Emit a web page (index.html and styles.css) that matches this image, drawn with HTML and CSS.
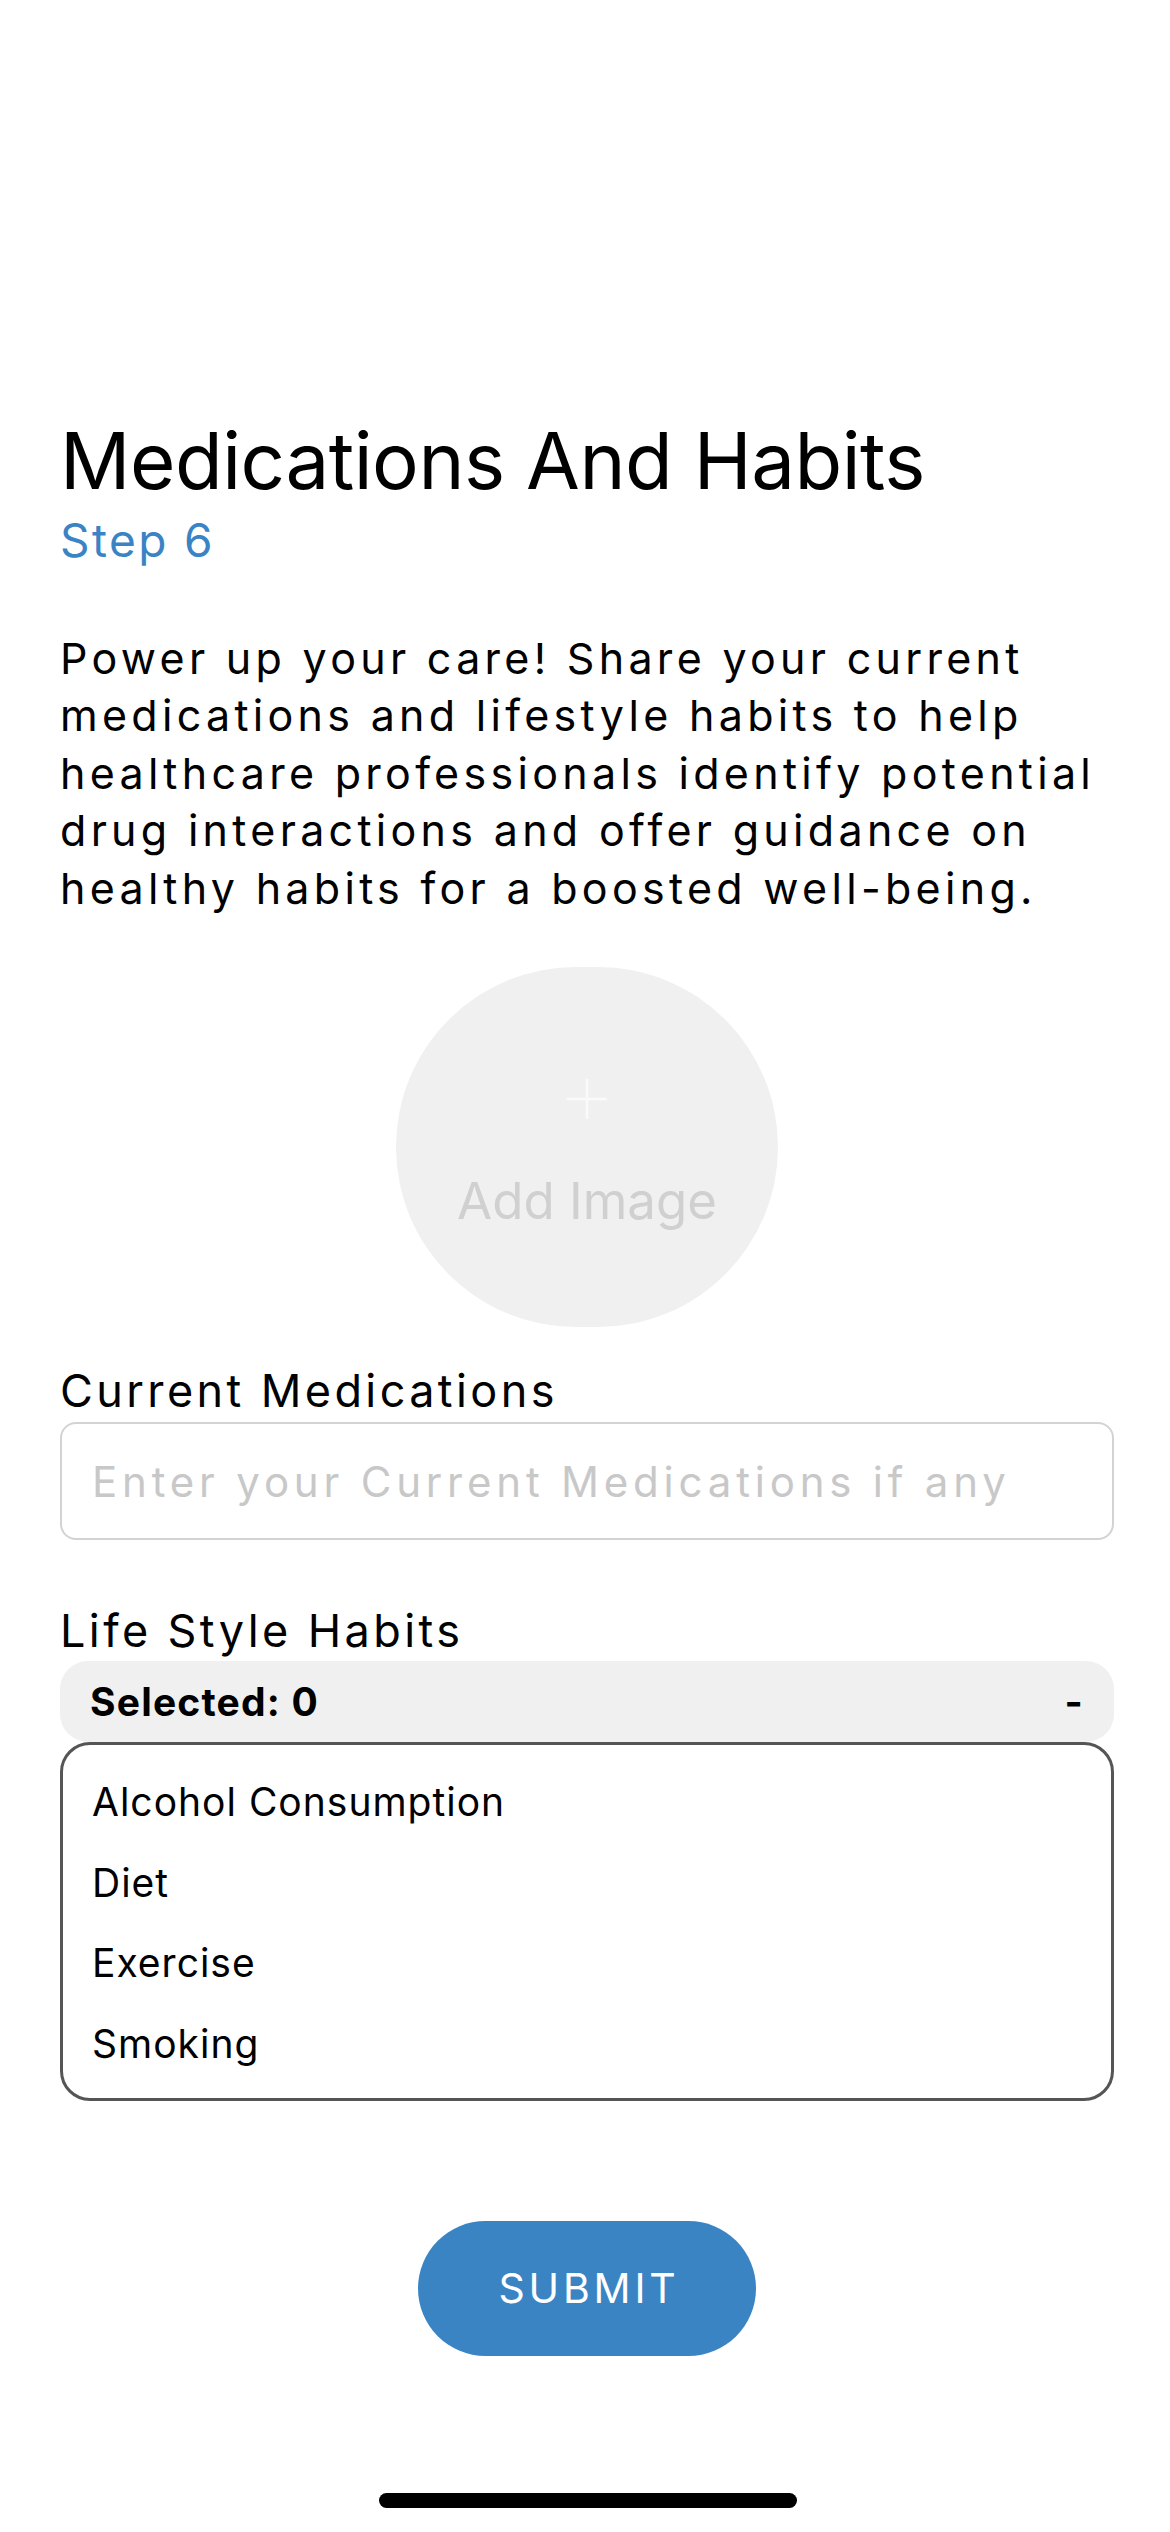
FILE: index.html
```html
<!DOCTYPE html>
<html lang="en">
<head>
<meta charset="utf-8">
<title>Medications And Habits</title>
<link rel="stylesheet" href="styles.css">
</head>
<body>
<main class="page">
  <h1 class="title">Medications And Habits</h1>
  <div class="step">Step 6</div>
  <p class="intro">Power up your care! Share your current medications and lifestyle habits to help healthcare professionals identify potential drug interactions and offer guidance on healthy habits for a boosted well-being.</p>

  <div class="avatar-wrap">
    <div class="avatar">
      <svg class="plus" width="40" height="40" viewBox="0 0 40 40"><path d="M20 0V40M0 20H40" stroke="#fafafa" stroke-width="2.5" fill="none"/></svg>
      <span class="avatar-text">Add Image</span>
    </div>
  </div>

  <label class="label label-meds" for="meds">Current Medications</label>
  <input id="meds" class="text-input" type="text" placeholder="Enter your Current Medications if any">

  <div class="label label-habits">Life Style Habits</div>
  <div class="select-bar"><span class="selected">Selected: 0</span><span class="dash">-</span></div>
  <ul class="options">
    <li>Alcohol Consumption</li>
    <li>Diet</li>
    <li>Exercise</li>
    <li>Smoking</li>
  </ul>

  <div class="submit-wrap"><button class="submit" type="button">SUBMIT</button></div>
</main>
<div class="home-indicator"></div>
</body>
</html>
```

FILE: styles.css
```css
html, body {
  margin: 0;
  padding: 0;
  background: #ffffff;
}
body {
  width: 1170px;
  height: 2532px;
  position: relative;
  overflow: hidden;
  font-family: Inter, "Noto Sans", sans-serif;
  color: #000;
}
.page {
  padding: 414px 56px 0 60px;
  display: flex;
  flex-direction: column;
}
.title {
  margin: 0;
  font-size: 78px;
  font-weight: 400;
  line-height: 94px;
  letter-spacing: -0.5px;
}
.step {
  margin-top: 5px;
  font-size: 46px;
  line-height: 55px;
  color: #3a83c5;
  letter-spacing: 2.4px;
}
.intro {
  margin: 62px -30px 0 0;
  font-size: 43px;
  line-height: 57.4px;
  letter-spacing: 4.3px;
}
.avatar-wrap {
  margin-top: 50px;
  display: flex;
  justify-content: center;
}
.avatar {
  width: 382px;
  height: 360px;
  border-radius: 180px;
  background: #f0f0f0;
  display: flex;
  flex-direction: column;
  align-items: center;
  padding-top: 112px;
  box-sizing: border-box;
}
.plus {
  display: block;
}
.avatar-text {
  margin-top: 51px;
  font-size: 51px;
  line-height: 61px;
  color: #d0d0d0;
}
.label {
  display: block;
  font-size: 45px;
  line-height: 54px;
  letter-spacing: 3.4px;
}
.label-meds {
  margin-top: 37px;
}
.text-input {
  margin-top: 4px;
  height: 118px;
  box-sizing: border-box;
  width: 100%;
  border: 2.5px solid #d3d3d3;
  border-radius: 16px;
  padding: 0 30px;
  font-family: Inter, "Noto Sans", sans-serif;
  font-size: 42px;
  letter-spacing: 4.8px;
  background: #fff;
  outline: none;
}
.text-input::placeholder {
  color: #c8c8c8;
}
.label-habits {
  margin-top: 64px;
}
.select-bar {
  margin-top: 3px;
  height: 81px;
  border-radius: 28px;
  background: #f0f0f0;
  display: flex;
  align-items: center;
  justify-content: space-between;
  padding: 0 30px;
  font-size: 39px;
  font-weight: 700;
  letter-spacing: 1.2px;
}
.options {
  list-style: none;
  margin: 0;
  padding: 17px 32px 13px 29px;
  border: 3px solid #555555;
  border-radius: 30px;
  font-size: 39px;
  line-height: 80.7px;
  letter-spacing: 1px;
}
.submit-wrap {
  margin-top: 120px;
  display: flex;
  justify-content: center;
}
.submit {
  width: 338px;
  height: 135px;
  border: none;
  border-radius: 68px;
  background: #3a84c4;
  color: #fff;
  font-family: Inter, "Noto Sans", sans-serif;
  font-size: 41px;
  letter-spacing: 3.8px;
  padding: 0 0 0 4px;
}
.home-indicator {
  position: absolute;
  left: 379px;
  top: 2493px;
  width: 418px;
  height: 15px;
  border-radius: 8px;
  background: #000;
}
```
